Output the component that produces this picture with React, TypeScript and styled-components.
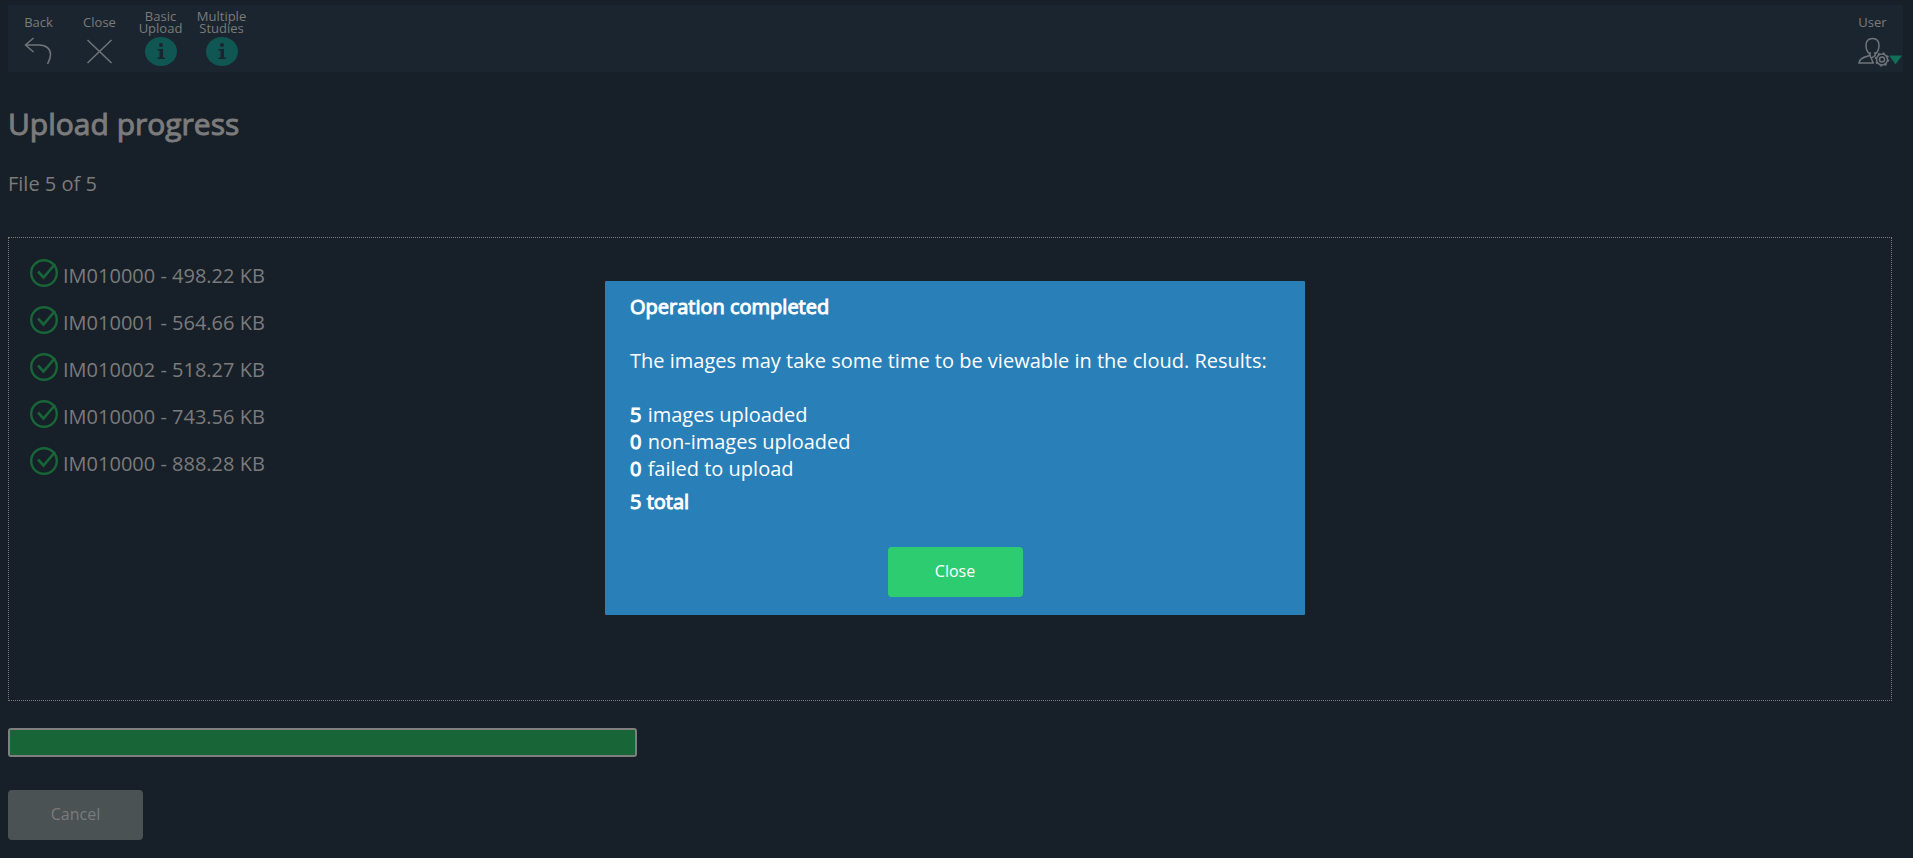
import React from "react";
import styled, { createGlobalStyle, css } from "styled-components";

const GlobalStyle = createGlobalStyle`
  *, *::before, *::after { box-sizing: border-box; }
  body {
    margin: 0;
    background: #171f28;
    color: #7b7b7b;
    font-family: "Open Sans", "Liberation Sans", sans-serif;
    font-size: 20px;
    line-height: 27px;
  }
  h1, h2, p, ul { margin: 0; padding: 0; font-weight: 400; }
  ul { list-style: none; }
  button { font: inherit; cursor: pointer; }
`;

const heavy = css`
  font-weight: 400;
  -webkit-text-stroke: 1px currentColor;
`;

const Page = styled.div`
  padding: 5px 10px 16px 8px;
`;

const Toolbar = styled.header`
  display: flex;
  justify-content: space-between;
  height: 67px;
  background: #1b252f;
`;

const Tools = styled.nav`
  display: flex;
`;

const ToolButton = styled.button`
  display: flex;
  flex-direction: column;
  align-items: center;
  width: 61px;
  padding: 5px 0 0;
  border: 0;
  background: none;
  color: #7b7b7b;
`;

const ToolLabel = styled.span`
  display: flex;
  align-items: center;
  width: min-content;
  height: 24px;
  font-size: 13px;
  line-height: 12px;
  text-align: center;
`;

const ToolIcon = styled.svg`
  display: block;
  flex: none;
  height: 34px;
  fill: none;
  stroke: #70757a;
`;

const Main = styled.main`
  padding: 32px 11px 0 0;
`;

const Title = styled.h1`
  ${heavy}
  font-size: 30px;
  line-height: 40px;
`;

const FileCount = styled.p`
  margin-top: 26px;
`;

const FileBox = styled.ul`
  display: flex;
  flex-direction: column;
  gap: 19px;
  min-height: 464px;
  margin-top: 40px;
  padding: 20px;
  border: 1px dotted #7b7b7b;
`;

const FileRow = styled.li`
  display: flex;
  gap: 4px;
  height: 28px;

  span { padding-top: 4px; }
`;

const CheckIcon = styled.svg`
  flex: none;
  width: 30px;
  height: 30px;
  fill: none;
  stroke: #186638;
`;

const UploadProgress = styled.progress`
  display: block;
  appearance: none;
  width: 33.4%;
  height: 29px;
  margin-top: 27px;
  border: 2px solid #7f7f7f;
  border-radius: 3px;
  background: #171f28;

  &::-webkit-progress-bar { background: #171f28; }
  &::-webkit-progress-value { background: #186638; }
`;

const ActionButton = styled.button<{ $primary?: boolean }>`
  display: block;
  width: 135px;
  height: 50px;
  padding: 0 0 2px;
  border: 0;
  border-radius: 4px;
  font-size: 16px;
  background: ${(p) => (p.$primary ? "#2ecc71" : "#4a5253")};
  color: ${(p) => (p.$primary ? "#ffffff" : "#7b7b7b")};
`;

const Footer = styled.footer`
  margin-top: 33px;
`;

const Overlay = styled.div`
  position: fixed;
  inset: 0;
  display: flex;
  justify-content: center;
  align-items: flex-start;
  padding: 281px 3px 0 0;
`;

const Dialog = styled.section`
  width: 700px;
  max-width: 100%;
  padding: 12px 25px 18px;
  border-radius: 1px;
  background: #2980b9;
  color: #ffffff;

  p { margin-top: 27px; }
  ul { margin-top: 27px; }
  button { margin: 32px auto 0; }
`;

const DialogTitle = styled.h2`
  ${heavy}
  font-size: 20px;
`;

const Strong = styled.strong`
  ${heavy}
  margin-right: 1px;
`;

const Total = styled.div`
  ${heavy}
  margin-top: 6px;
`;

const files = [
  "IM010000 - 498.22 KB",
  "IM010001 - 564.66 KB",
  "IM010002 - 518.27 KB",
  "IM010000 - 743.56 KB",
  "IM010000 - 888.28 KB",
];

const results = [
  { count: 5, label: "images uploaded" },
  { count: 0, label: "non-images uploaded" },
  { count: 0, label: "failed to upload" },
];

const BackIcon = () => (
  <ToolIcon width="34" height="34" viewBox="0 0 34 34" strokeWidth="1.5">
    <path d="M11.500 4 3.500 11l8 7M3.500 11h14c6.500 0 11 4 11 9.500 0 4-1.500 6.500-3 9.500" />
  </ToolIcon>
);

const CloseIcon = () => (
  <ToolIcon width="34" height="34" viewBox="0 0 34 34" strokeWidth="1.5">
    <path d="M4.500 6 28.500 29M28.500 6 4.500 29" />
  </ToolIcon>
);

const InfoIcon = () => (
  <ToolIcon width="34" height="34" viewBox="0 0 34 34">
    <ellipse cx="17" cy="17.500" rx="16" ry="14.500" fill="#105652" stroke="none" />
    <ellipse cx="17" cy="11" rx="2" ry="2" fill="#1b252f" stroke="none" />
    <path d="M13.500 15H19v8.500h2V25h-7.500v-1.500h2v-7h-2z" fill="#1b252f" stroke="none" />
  </ToolIcon>
);

const UserIcon = () => (
  <ToolIcon width="60" height="34" viewBox="-14 0 60 34" strokeWidth="1.500">
    <path d="M13 20.500c-3-2.500-4-6-4-9C9 7 11.500 4.500 15.500 4.500S22 7 22 11.500c0 3-1 6.500-4 9" />
    <path d="M13 18v3.500c-4 1.500-10.500 2-11 7.500h15M18 18v3.500l-4 3M13 21.500l3 7" />
    <circle cx="25" cy="25.500" r="5.500" />
    <circle cx="25" cy="25.500" r="2.500" />
    <circle cx="25" cy="25.500" r="6.500" strokeDasharray="2 3.100" />
    <path d="M32 21.500h13l-6.500 9z" fill="#0f6f58" stroke="none" />
  </ToolIcon>
);

const Check = () => (
  <CheckIcon viewBox="0 0 30 30">
    <circle cx="15" cy="15" r="12.800" strokeWidth="2.400" />
    <path d="M9 13.500 14.500 19.500 26 6" strokeWidth="2.600" />
  </CheckIcon>
);

interface ToolProps {
  label: string;
  icon: React.ReactNode;
}

const Tool = ({ label, icon }: ToolProps) => (
  <ToolButton type="button">
    <ToolLabel>{label}</ToolLabel>
    {icon}
  </ToolButton>
);

export default function App() {
  return (
    <>
      <GlobalStyle />
      <Page>
        <Toolbar>
          <Tools>
            <Tool label="Back" icon={<BackIcon />} />
            <Tool label="Close" icon={<CloseIcon />} />
            <Tool label="Basic Upload" icon={<InfoIcon />} />
            <Tool label="Multiple Studies" icon={<InfoIcon />} />
          </Tools>
          <Tool label="User" icon={<UserIcon />} />
        </Toolbar>
        <Main>
          <Title>Upload progress</Title>
          <FileCount>File 5 of 5</FileCount>
          <FileBox>
            {files.map((file) => (
              <FileRow key={file}>
                <Check />
                <span>{file}</span>
              </FileRow>
            ))}
          </FileBox>
          <UploadProgress value={5} max={5} aria-label="Upload progress" />
          <Footer>
            <ActionButton type="button">Cancel</ActionButton>
          </Footer>
        </Main>
      </Page>
      <Overlay>
        <Dialog role="dialog" aria-modal="true" aria-labelledby="result-title">
          <DialogTitle id="result-title">Operation completed</DialogTitle>
          <p>The images may take some time to be viewable in the cloud. Results:</p>
          <ul>
            {results.map(({ count, label }) => (
              <li key={label}>
                <Strong>{count}</Strong> {label}
              </li>
            ))}
          </ul>
          <Total>5 total</Total>
          <ActionButton type="button" $primary>
            Close
          </ActionButton>
        </Dialog>
      </Overlay>
    </>
  );
}
